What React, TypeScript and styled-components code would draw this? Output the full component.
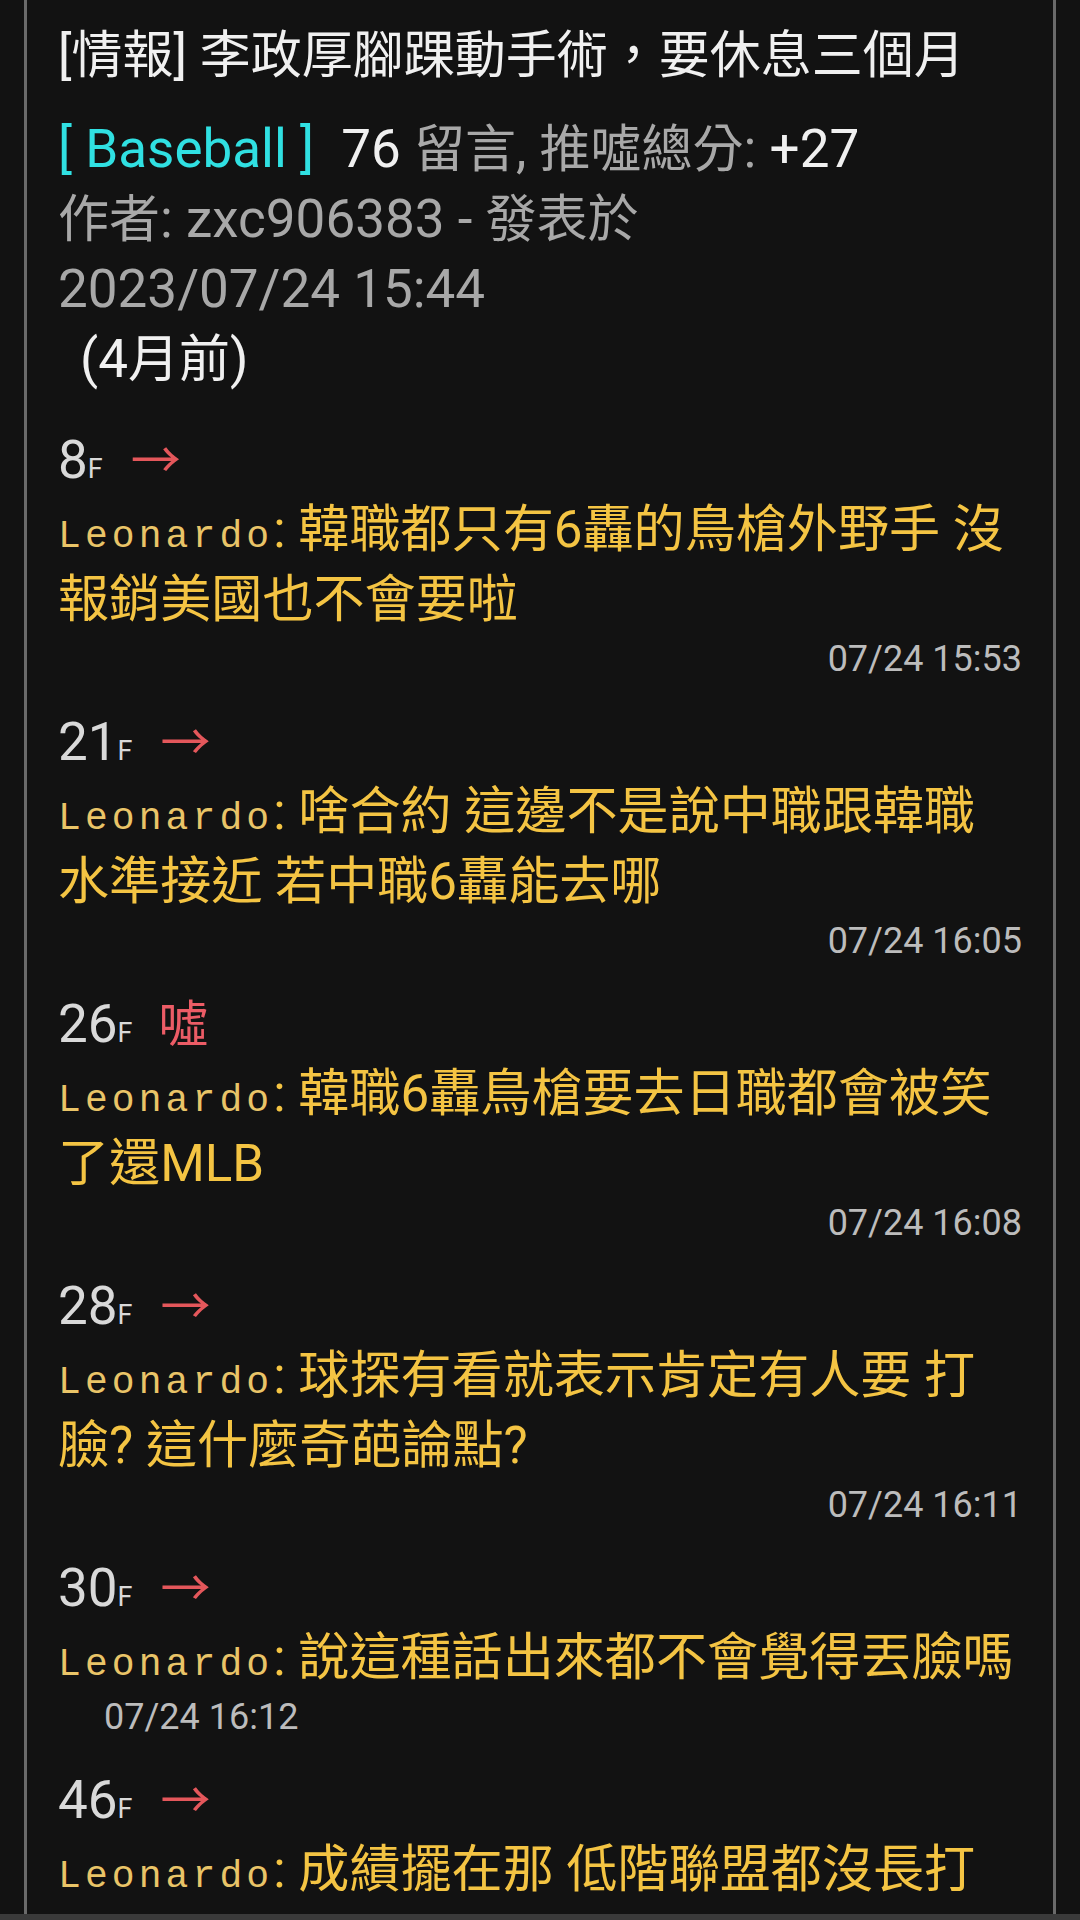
import React from "react";
import styled, { createGlobalStyle } from "styled-components";

const GlobalStyle = createGlobalStyle`
  html, body {
    margin: 0;
    padding: 0;
    background: #121212;
  }
  body {
    font-family: Roboto, "Noto Sans CJK TC", sans-serif;
  }
`;

const Page = styled.div`
  width: 1080px;
  height: 1920px;
  display: flex;
  flex-direction: column;
  background: #121212;
  overflow: hidden;
`;

const Panel = styled.main`
  flex: 1;
  min-height: 0;
  margin: 0 24px;
  border-left: 3px solid #6a6a6a;
  border-right: 3px solid #6a6a6a;
  padding: 21px 33px 0 31px;
  overflow: hidden;
`;

const BottomBar = styled.div`
  height: 6px;
  flex: none;
  background: #3a3a3a;
`;

const Title = styled.h1`
  margin: 0;
  font-size: 51px;
  font-weight: 400;
  line-height: 70px;
  color: #f0f0f0;
  white-space: nowrap;
`;

const Meta = styled.div`
  margin-top: 23px;
  font-size: 53px;
  line-height: 70px;
  color: #a8a8a8;
`;

const MetaLine = styled.div<{ $indent?: number }>`
  padding-left: ${(p) => p.$indent ?? 0}px;
  white-space: nowrap;
`;

const Cjk = styled.span`
  font-family: "Noto Sans CJK TC", sans-serif;
  font-size: 51px;
  line-height: 1;
`;

const Board = styled.span`
  color: #30e0e2;
  margin-right: 14px;
`;

const Bright = styled.span`
  color: #f0f0f0;
`;

const Comments = styled.section`
  margin-top: 31px;
  display: flex;
  flex-direction: column;
  gap: 23px;
`;

const Push = styled.article`
  display: flex;
  flex-direction: column;
`;

const FloorRow = styled.div`
  height: 70px;
  font-size: 53px;
  line-height: 70px;
  color: #d9d9d9;
  white-space: nowrap;
`;

const FloorF = styled.span`
  font-size: 27px;
  line-height: 1;
`;

const Tag = styled.span<{ $boo?: boolean }>`
  margin-left: ${(p) => (p.$boo ? 26 : 28)}px;
  font-family: "Noto Sans CJK TC", sans-serif;
  font-size: 50px;
  line-height: 1;
  color: ${(p) => (p.$boo ? "#ec5c66" : "#e4575b")};
`;

const Body = styled.div`
  font-size: 51.1px;
  line-height: 70px;
  color: #f4c443;
`;

const User = styled.span`
  font-family: "Liberation Mono", monospace;
  font-size: 38px;
  line-height: 1;
  letter-spacing: 4.1px;
  color: #e9c468;
`;

const Time = styled.div<{ $left?: boolean }>`
  font-size: 36px;
  line-height: 49px;
  color: #bcbcbc;
  text-align: ${(p) => (p.$left ? "left" : "right")};
  padding-left: ${(p) => (p.$left ? 46 : 0)}px;
  margin-right: ${(p) => (p.$left ? 0 : -2)}px;
`;

type Item = {
  floor: number;
  tag: string;
  user: string;
  text: string;
  time?: string;
  timeLeft?: boolean;
};

const items: Item[] = [
  {
    floor: 8,
    tag: "→",
    user: "Leonardo",
    text: "韓職都只有6轟的鳥槍外野手 沒報銷美國也不會要啦",
    time: "07/24 15:53",
  },
  {
    floor: 21,
    tag: "→",
    user: "Leonardo",
    text: "啥合約 這邊不是說中職跟韓職水準接近 若中職6轟能去哪",
    time: "07/24 16:05",
  },
  {
    floor: 26,
    tag: "噓",
    user: "Leonardo",
    text: "韓職6轟鳥槍要去日職都會被笑了還MLB",
    time: "07/24 16:08",
  },
  {
    floor: 28,
    tag: "→",
    user: "Leonardo",
    text: "球探有看就表示肯定有人要 打臉? 這什麼奇葩論點?",
    time: "07/24 16:11",
  },
  {
    floor: 30,
    tag: "→",
    user: "Leonardo",
    text: "說這種話出來都不會覺得丟臉嗎",
    time: "07/24 16:12",
    timeLeft: true,
  },
  {
    floor: 46,
    tag: "→",
    user: "Leonardo",
    text: "成績擺在那 低階聯盟都沒長打",
  },
];

export default function App() {
  return (
    <>
      <GlobalStyle />
      <Page>
        <Panel>
          <Title>[情報] 李政厚腳踝動手術，要休息三個月</Title>
          <Meta>
            <MetaLine>
              <Board>[ Baseball ]</Board> <Bright>76</Bright> <Cjk>留言</Cjk>,{" "}
              <Cjk>推噓總分</Cjk>: <Bright>+27</Bright>
            </MetaLine>
            <MetaLine>
              <Cjk>作者</Cjk>: zxc906383 - <Cjk>發表於</Cjk>
            </MetaLine>
            <MetaLine>2023/07/24 15:44</MetaLine>
            <MetaLine $indent={22}>
              <Bright>
                (4<Cjk>月前</Cjk>)
              </Bright>
            </MetaLine>
          </Meta>
          <Comments>
            {items.map((it) => (
              <Push key={it.floor}>
                <FloorRow>
                  {it.floor}
                  <FloorF>F</FloorF>
                  <Tag $boo={it.tag === "噓"}>{it.tag}</Tag>
                </FloorRow>
                <Body>
                  <User>{it.user}</User>: {it.text}
                </Body>
                {it.time && <Time $left={it.timeLeft}>{it.time}</Time>}
              </Push>
            ))}
          </Comments>
        </Panel>
        <BottomBar />
      </Page>
    </>
  );
}
